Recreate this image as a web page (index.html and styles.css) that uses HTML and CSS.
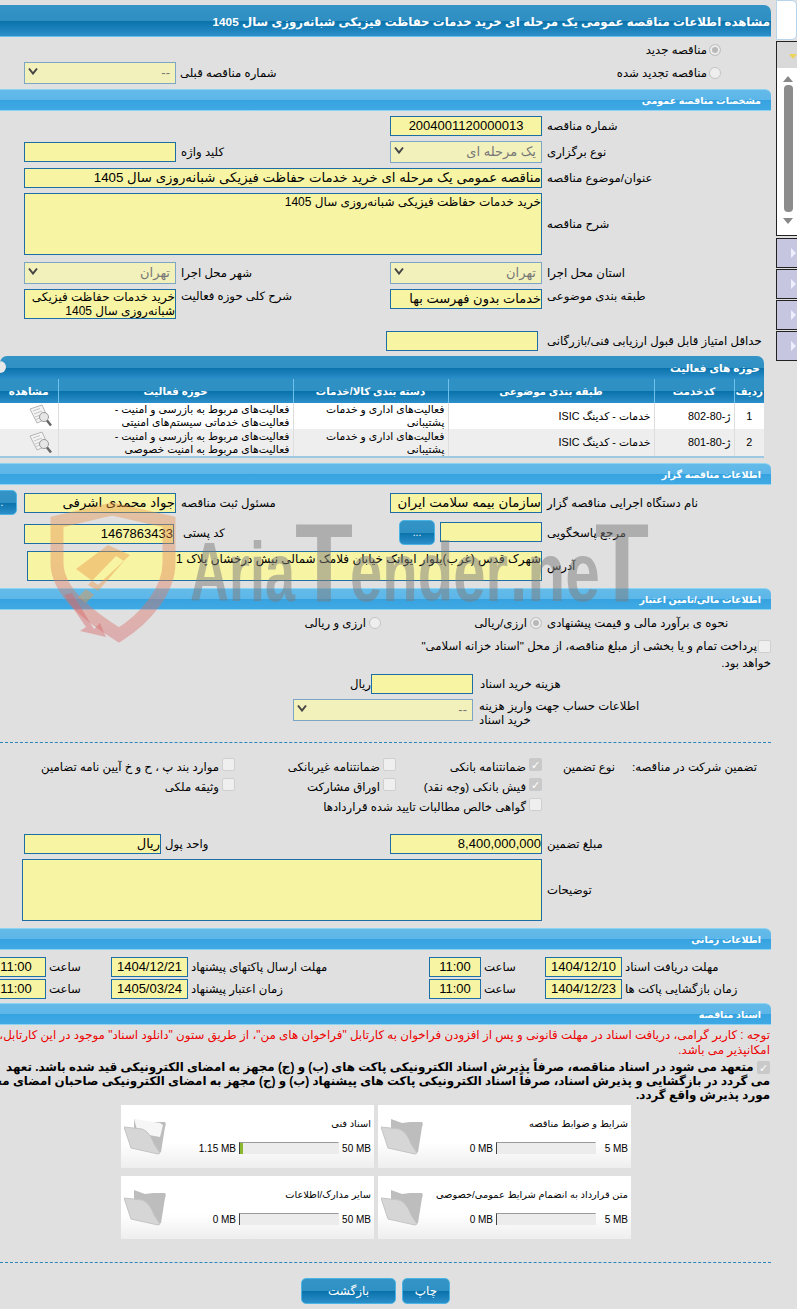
FILE: index.html
```html
<!DOCTYPE html>
<html lang="fa" dir="rtl">
<head>
  <meta charset="UTF-8">
  <title>مشاهده اطلاعات مناقصه</title>
  <link rel="stylesheet" href="styles.css">
</head>
<body>
  <!-- Side strip -->
  <aside class="side">
    <div class="side-top"></div>
    <div class="side-box">
      <div class="side-head"><i class="tri-yellow"></i></div>
      <div class="side-scroll">
        <i class="arrow-up"></i>
        <div class="thumb"></div>
        <i class="arrow-down"></i>
      </div>
    </div>
    <div class="side-tab"><i class="tri-white"></i></div>
    <div class="side-tab"><i class="tri-white"></i></div>
    <div class="side-tab"><i class="tri-white"></i></div>
    <div class="side-tab"><i class="tri-white"></i></div>
  </aside>

  <main class="main">
    <h1 class="title-bar">مشاهده اطلاعات مناقصه عمومی یک مرحله ای خرید خدمات حفاظت فیزیکی شبانه‌روزی سال 1405</h1>

    <div class="top-row">
      <div class="radio-line"><span class="radio on"></span><span>مناقصه جدید</span></div>
      <div class="prev-row">
        <div class="radio-line"><span class="radio"></span><span>مناقصه تجدید شده</span></div>
        <div class="prev-field">
          <label class="lbl">شماره مناقصه قبلی</label>
          <div class="sel"><span>--</span><svg class="chev" viewBox="0 0 10 8"><path d="M1 1.500 5 6.500 9 1.500" /></svg></div>
        </div>
      </div>
    </div>

    <h2 class="sec-bar">مشخصات مناقصه عمومی</h2>
    <div class="form">
      <div class="row two">
        <label class="lbl">شماره مناقصه</label>
        <div class="inp center">2004001120000013</div>
      </div>
      <div class="row two">
        <label class="lbl">نوع برگزاری</label>
        <div class="sel"><span>یک مرحله ای</span><svg class="chev" viewBox="0 0 10 8"><path d="M1 1.500 5 6.500 9 1.500" /></svg></div>
        <label class="lbl">کلید واژه</label>
        <div class="inp"></div>
      </div>
      <div class="row wide">
        <label class="lbl">عنوان/موضوع مناقصه</label>
        <div class="inp big">مناقصه عمومی یک مرحله ای خرید خدمات حفاظت فیزیکی شبانه‌روزی سال 1405</div>
      </div>
      <div class="row wide">
        <label class="lbl">شرح مناقصه</label>
        <div class="inp area h62">خرید خدمات حفاظت فیزیکی شبانه‌روزی سال 1405</div>
      </div>
      <div class="row two mt2">
        <label class="lbl">استان محل اجرا</label>
        <div class="sel"><span>تهران</span><svg class="chev" viewBox="0 0 10 8"><path d="M1 1.500 5 6.500 9 1.500" /></svg></div>
        <label class="lbl">شهر محل اجرا</label>
        <div class="sel"><span>تهران</span><svg class="chev" viewBox="0 0 10 8"><path d="M1 1.500 5 6.500 9 1.500" /></svg></div>
      </div>
      <div class="row two top">
        <label class="lbl">طبقه بندی موضوعی</label>
        <div class="inp">خدمات بدون فهرست بها</div>
        <label class="lbl">شرح کلی حوزه فعالیت</label>
        <div class="inp area h30">خرید خدمات حفاظت فیزیکی شبانه‌روزی سال 1405</div>
      </div>
      <div class="row score">
        <label class="lbl">حداقل امتیاز قابل قبول ارزیابی فنی/بازرگانی</label>
        <div class="inp"></div>
      </div>
    </div>

    <section class="panel">
      <h3 class="panel-head">حوزه های فعالیت <span class="toggle"></span></h3>
      <table class="grid">
        <colgroup>
          <col class="c-row"><col class="c-code"><col class="c-cat"><col class="c-group"><col class="c-area"><col class="c-view">
        </colgroup>
        <thead>
          <tr><th>ردیف</th><th>کدخدمت</th><th>طبقه بندی موضوعی</th><th>دسته بندی کالا/خدمات</th><th>حوزه فعالیت</th><th>مشاهده</th></tr>
        </thead>
        <tbody>
          <tr>
            <td class="mid">1</td><td>ژ-80-802</td><td>خدمات - کدینگ ISIC</td>
            <td>فعالیت‌های اداری و خدمات پشتیبانی</td>
            <td>فعالیت‌های مربوط به بازرسی و امنیت -<br>فعالیت‌های خدماتی سیستم‌های امنیتی</td>
            <td class="mid"><svg class="doc-ico" viewBox="0 0 25 24"><path d="M2 5 14 1l6 13-11 5z" fill="#f4f4f4" stroke="#b5b5b5"/><path d="M5 7l7-2.500M6 10l8-3M7 13l8-3M8 15.500l5-2" stroke="#c4c4c4"/><circle cx="16" cy="13" r="4.500" fill="#e6e6e6" stroke="#999"/><path d="M19 16.500l4 5" stroke="#666" stroke-width="2.500"/></svg></td>
          </tr>
          <tr class="alt">
            <td class="mid">2</td><td>ژ-80-801</td><td>خدمات - کدینگ ISIC</td>
            <td>فعالیت‌های اداری و خدمات پشتیبانی</td>
            <td>فعالیت‌های مربوط به بازرسی و امنیت -<br>فعالیت‌های مربوط به امنیت خصوصی</td>
            <td class="mid"><svg class="doc-ico" viewBox="0 0 25 24"><path d="M2 5 14 1l6 13-11 5z" fill="#f4f4f4" stroke="#b5b5b5"/><path d="M5 7l7-2.500M6 10l8-3M7 13l8-3M8 15.500l5-2" stroke="#c4c4c4"/><circle cx="16" cy="13" r="4.500" fill="#e6e6e6" stroke="#999"/><path d="M19 16.500l4 5" stroke="#666" stroke-width="2.500"/></svg></td>
          </tr>
        </tbody>
      </table>
    </section>

    <h2 class="sec-bar s2">اطلاعات مناقصه گزار</h2>
    <div class="form f2">
      <div class="row two edge-row">
        <label class="lbl">نام دستگاه اجرایی مناقصه گزار</label>
        <div class="inp big">سازمان بیمه سلامت ایران</div>
        <label class="lbl">مسئول ثبت مناقصه</label>
        <div class="inp big">جواد محمدی اشرفی</div>
        <button class="btn dots edge">...</button>
      </div>
      <div class="row ref">
        <label class="lbl">مرجع پاسخگویی</label>
        <div class="inp"></div>
        <button class="btn dots">...</button>
        <label class="lbl">کد پستی</label>
        <div class="inp">1467863433</div>
      </div>
      <div class="row addr">
        <label class="lbl">آدرس</label>
        <div class="inp area h30">شهرک قدس (غرب)بلوار ایوانک خیابان فلامک شمالی نبش درخشان پلاک 1</div>
      </div>
    </div>

    <h2 class="sec-bar s3">اطلاعات مالی/تامین اعتبار</h2>
    <div class="fin">
      <div class="cur-row">
        <span class="lbl">نحوه ی برآورد مالی و قیمت پیشنهادی</span>
        <span class="radio on"></span><span class="cur-a">ارزی/ریالی</span>
        <span class="radio"></span><span>ارزی و ریالی</span>
      </div>
      <div class="treasury"><span class="chk"></span>پرداخت تمام و یا بخشی از مبلغ مناقصه، از محل "اسناد خزانه اسلامی" خواهد بود.</div>
      <div class="cost-row">
        <label class="lbl">هزینه خرید اسناد</label>
        <div class="inp"></div>
        <span>ریال</span>
      </div>
      <div class="acct-row">
        <label class="lbl">اطلاعات حساب جهت واریز هزینه خرید اسناد</label>
        <div class="sel"><span>--</span><svg class="chev" viewBox="0 0 10 8"><path d="M1 1.500 5 6.500 9 1.500" /></svg></div>
      </div>
    </div>
    <hr class="dash d1">

    <div class="guar">
      <span class="g-title">تضمین شرکت در مناقصه:</span>
      <span class="g-type">نوع تضمین</span>
      <div class="g-opts">
        <span class="opt"><span class="chk on">✓</span>ضمانتنامه بانکی</span>
        <span class="opt"><span class="chk"></span>ضمانتنامه غیربانکی</span>
        <span class="opt"><span class="chk"></span>موارد بند پ ، ح و خ آیین نامه تضامین</span>
        <span class="opt"><span class="chk on">✓</span>فیش بانکی (وجه نقد)</span>
        <span class="opt"><span class="chk"></span>اوراق مشارکت</span>
        <span class="opt"><span class="chk"></span>وثیقه ملکی</span>
        <span class="opt full"><span class="chk"></span>گواهی خالص مطالبات تایید شده قراردادها</span>
      </div>
    </div>

    <div class="form f3">
      <div class="row money">
        <label class="lbl">مبلغ تضمین</label>
        <div class="inp">8,400,000,000</div>
        <label class="lbl">واحد پول</label>
        <div class="inp">ریال</div>
      </div>
      <div class="row notes">
        <label class="lbl">توضیحات</label>
        <div class="inp area h62"></div>
      </div>
    </div>

    <h2 class="sec-bar s4">اطلاعات زمانی</h2>
    <div class="times">
      <label class="lbl">مهلت دریافت اسناد</label><div class="inp center">1404/12/10</div>
      <label class="lbl">ساعت</label><div class="inp center">11:00</div>
      <label class="lbl">مهلت ارسال پاکتهای پیشنهاد</label><div class="inp center">1404/12/21</div>
      <label class="lbl">ساعت</label><div class="inp center">11:00</div>
      <label class="lbl">زمان بازگشایی پاکت ها</label><div class="inp center">1404/12/23</div>
      <label class="lbl">ساعت</label><div class="inp center">11:00</div>
      <label class="lbl">زمان اعتبار پیشنهاد</label><div class="inp center">1405/03/24</div>
      <label class="lbl">ساعت</label><div class="inp center">11:00</div>
    </div>

    <h2 class="sec-bar s5">اسناد مناقصه</h2>
    <p class="note-red">توجه : کاربر گرامی، دریافت اسناد در مهلت قانونی و پس از افزودن فراخوان به کارتابل "فراخوان های من"، از طریق ستون "دانلود اسناد" موجود در این کارتابل،<br>امکانپذیر می باشد.</p>
    <p class="note-bold"><span class="chk on">✓</span> متعهد می شود در اسناد مناقصه، صرفاً پذیرش اسناد الکترونیکی پاکت های (ب) و (ج) مجهز به امضای الکترونیکی قید شده باشد. تعهد<br>می گردد در بازگشایی و پذیرش اسناد، صرفاً اسناد الکترونیکی پاکت های پیشنهاد (ب) و (ج) مجهز به امضای الکترونیکی صاحبان امضای معتبر<br>مورد پذیرش واقع گردد.</p>

    <div class="docs">
      <div class="doc">
        <div class="doc-name">شرایط و ضوابط مناقصه</div>
        <div class="doc-row"><span class="size" dir="ltr">5 MB</span><span class="meter"></span><span class="used" dir="ltr">0 MB</span></div>
        <svg class="folder" viewBox="0 0 42 37"><path d="M10 1l11 4 8-1h12c1 1 1 3 0 5l-4 25-4 2L10 20z" fill="#bdbdbd"/><path d="M0 9l18 2c6 2 10 9 12 15l6 9-2 1-27-6z" fill="#d6d6d6" stroke="#c4c4c4"/></svg>
      </div>
      <div class="doc">
        <div class="doc-name">اسناد فنی</div>
        <div class="doc-row"><span class="size" dir="ltr">50 MB</span><span class="meter"><i class="fill"></i></span><span class="used" dir="ltr">1.15 MB</span></div>
        <svg class="folder" viewBox="0 0 42 37"><path d="M10 1l11 4 8-1h12c1 1 1 3 0 5l-4 25-4 2L10 20z" fill="#bdbdbd"/><path d="M10 1l26 4 3 2-3 12-22-4z" fill="#f6f6f6"/><path d="M0 9l18 2c6 2 10 9 12 15l6 9-2 1-27-6z" fill="#d6d6d6" stroke="#c4c4c4"/></svg>
      </div>
      <div class="doc">
        <div class="doc-name">متن قرارداد به انضمام شرایط عمومی/خصوصی</div>
        <div class="doc-row"><span class="size" dir="ltr">5 MB</span><span class="meter"></span><span class="used" dir="ltr">0 MB</span></div>
        <svg class="folder" viewBox="0 0 42 37"><path d="M10 1l11 4 8-1h12c1 1 1 3 0 5l-4 25-4 2L10 20z" fill="#bdbdbd"/><path d="M0 9l18 2c6 2 10 9 12 15l6 9-2 1-27-6z" fill="#d6d6d6" stroke="#c4c4c4"/></svg>
      </div>
      <div class="doc">
        <div class="doc-name">سایر مدارک/اطلاعات</div>
        <div class="doc-row"><span class="size" dir="ltr">50 MB</span><span class="meter"></span><span class="used" dir="ltr">0 MB</span></div>
        <svg class="folder" viewBox="0 0 42 37"><path d="M10 1l11 4 8-1h12c1 1 1 3 0 5l-4 25-4 2L10 20z" fill="#bdbdbd"/><path d="M0 9l18 2c6 2 10 9 12 15l6 9-2 1-27-6z" fill="#d6d6d6" stroke="#c4c4c4"/></svg>
      </div>
    </div>
    <hr class="dash d2">

    <div class="actions">
      <button class="btn print">چاپ</button>
      <button class="btn back">بازگشت</button>
    </div>
  </main>

  <!-- Watermark over the form -->
  <svg class="watermark" viewBox="0 0 797 150">
    <defs>
      <linearGradient id="wm-shield" x1="0" y1="0" x2="0" y2="1">
        <stop offset="0" stop-color="#e8964a"/>
        <stop offset="1" stop-color="#d8686a"/>
      </linearGradient>
    </defs>
    <path d="M112 8 57 21V62c0 30 35 55 62 72 27-17 50-45 50-72V21z" fill="none" stroke="url(#wm-shield)" stroke-width="13" opacity=".42"/>
    <path d="M76 68 108 44l22 10-32 30zM88 84l10 6 26-30-8-5zM78 96l8-8 8 6-8 8z" fill="#e8964a" opacity=".45"/>
    <path d="M72 92l22 36 6-6 6 14-26-6 6-4-22-32z" fill="#d8686a" opacity=".45"/>
    <g class="wm-text" fill="#7d7d7d" opacity=".5">
      <text x="190" y="100" font-size="84" textLength="105" lengthAdjust="spacingAndGlyphs">Aria</text>
      <text x="295" y="100" font-size="112" textLength="58" lengthAdjust="spacingAndGlyphs">T</text>
      <text x="350" y="100" font-size="84" textLength="158" lengthAdjust="spacingAndGlyphs">ender</text>
      <text x="510" y="100" font-size="84" textLength="90" lengthAdjust="spacingAndGlyphs">.ne</text>
      <text x="595" y="100" font-size="112" textLength="54" lengthAdjust="spacingAndGlyphs">T</text>
    </g>
  </svg>
</body>
</html>
```

FILE: styles.css
```css
html, body {
  margin: 0;
  height: 1309px;
  overflow: hidden;
}
body {
  position: relative;
  display: flex;
  gap: 5px;
  background-color: #e0e0e0;
  font-family: "Liberation Sans", "DejaVu Sans", sans-serif;
  font-size: 11.700px;
  color: #000;
}

/* side strip */
.side {
  width: 21px;
  flex: none;
}
.side-top {
  height: 38px;
  background-color: #fff;
  border: 1px solid #b8d4ec;
  border-radius: 0 5px 5px 0;
  margin-bottom: 1px;
}
.side-box {
  border: 1px solid #222;
  border-right: none;
  height: 193px;
  background-color: #fff;
}
.side-head {
  height: 26px;
  background-color: #d9d9d9;
  position: relative;
}
.tri-yellow {
  position: absolute;
  left: 12px;
  top: 12px;
  border: 4px solid transparent;
  border-top: 5px solid #ecd35a;
  border-bottom: none;
}
.side-scroll {
  display: flex;
  flex-direction: column;
  align-items: flex-start;
  padding: 8px 3px 0;
}
.arrow-up, .arrow-down {
  border: 5px solid transparent;
  margin-right: 1px;
}
.arrow-up {
  border-bottom: 6px solid #888;
  border-top: none;
}
.arrow-down {
  border-top: 6px solid #888;
  border-bottom: none;
  margin-top: 6px;
}
.thumb {
  width: 9px;
  height: 127px;
  margin: 3px 1px 0;
  border-radius: 4px;
  background-color: #8c8c8c;
}
.side-tab {
  height: 28px;
  margin-top: 1px;
  border: 1px solid #222;
  border-right: none;
  background-color: #c6c6e0;
  position: relative;
}
.side-box + .side-tab {
  margin-top: 2px;
}
.tri-white {
  position: absolute;
  left: 14px;
  top: 9px;
  border: 5px solid transparent;
  border-left: 5px solid #eef;
  border-right: none;
}

/* main column */
.main {
  width: 771px;
  flex: none;
  height: 1309px;
  overflow: hidden;
  padding-top: 5px;
  box-sizing: border-box;
}
.title-bar, .sec-bar, .panel-head {
  margin: 0;
  color: #fff;
  font-weight: bold;
}
.title-bar {
  height: 32px;
  line-height: 34px;
  font-size: 11.750px;
  white-space: nowrap;
  padding-right: 1px;
  border-radius: 0 7px 0 0;
  border-bottom: 1px solid #6ac0ea;
  box-sizing: border-box;
  background: linear-gradient(#3593c6 0, #2f8fc2 50%, #0a72aa 52%, #2c8fca 100%);
}
.sec-bar {
  height: 22px;
  line-height: 21px;
  font-size: 9.500px;
  padding-right: 10px;
  border-radius: 0 6px 0 0;
  border-top: 1px solid #8fd3f2;
  border-bottom: 1px solid #8fd3f2;
  box-sizing: border-box;
  background: linear-gradient(#64bbe9 0, #5cb6e8 50%, #36a3e0 52%, #40a9e4 100%);
}
.s2 { margin-top: 5px; }
.s3 { margin-top: 7px; }
.s4 { margin-top: 7px; }
.s5 { margin-top: 4px; }

.lbl {
  text-align: left;
  line-height: 20px;
  display: block;
}
.inp {
  height: 20px;
  line-height: 18px;
  box-sizing: border-box;
  background-color: #f7f4a4;
  border: 1px solid #1c6ea4;
  font-size: 13px;
  text-align: right;
  overflow: hidden;
  white-space: nowrap;
}
.inp.center { text-align: center; }
.inp.big { font-size: 13.300px; }
.inp.area {
  font-size: 12px;
  white-space: normal;
  line-height: 17px;
}
.h62 { height: 62px; }
.inp.h30 {
  height: 30px;
  line-height: 14px;
}
.sel {
  height: 22px;
  box-sizing: border-box;
  display: flex;
  justify-content: space-between;
  align-items: center;
  padding: 0 5px 2px 3px;
  background-color: #f2f1bb;
  border: 1px solid #7da5c4;
  color: #777;
  font-size: 13px;
}
.chev {
  width: 10px;
  height: 8px;
  margin-bottom: 2px;
}
.chev path {
  fill: none;
  stroke: #444;
  stroke-width: 2;
}

.radio {
  display: inline-block;
  flex: none;
  width: 12px;
  height: 12px;
  box-sizing: border-box;
  border-radius: 50%;
  border: 1px solid #c4c4c4;
  background-color: #eee;
}
.radio.on {
  background-color: #b8b8b8;
  box-shadow: inset 0 0 0 2px #eee;
}
.chk {
  display: inline-block;
  width: 13px;
  height: 13px;
  line-height: 13px;
  text-align: center;
  box-sizing: border-box;
  flex: none;
  border: 1px solid #cfcfcf;
  border-radius: 2px;
  background-color: #efefef;
  color: #fff;
  font-size: 11px;
}
.chk.on {
  background-color: #c9c9c9;
  border-color: #c9c9c9;
}

/* tender type */
.top-row {
  height: 51px;
}
.radio-line {
  display: flex;
  align-items: center;
  gap: 2px;
  padding-right: 50px;
  height: 20px;
}
.top-row > .radio-line {
  padding-top: 2px;
  margin-top: 1px;
  height: 19px;
}
.prev-row {
  display: flex;
  justify-content: space-between;
  align-items: center;
  margin-top: 2px;
}
.prev-field {
  display: flex;
  gap: 4px;
  margin-left: 24px;
  margin-top: 1px;
}
.prev-field .sel { width: 152px; }
.prev-field .lbl { line-height: 22px; }

/* form rows */
.form {
  display: flex;
  flex-direction: column;
  gap: 5px;
  padding-top: 5px;
}
.row {
  display: grid;
  align-items: center;
}
.row.two {
  grid-template-columns: 229px 152px 214px 152px;
}
.row .lbl { padding-left: 5px; }
.row.wide {
  grid-template-columns: 229px 518px;
}
.row.top { align-items: start; }
.row.top .lbl { line-height: 14px; }
.row.score {
  grid-template-columns: 233px 152px;
  margin-top: 7px;
}
.row.score .lbl { padding-left: 9px; }
.mt2 { margin-top: 2px; }

/* activities table */
.panel {
  width: 764px;
  margin: 5px 7px 0 0;
  border-bottom: 2px solid #9cc8e2;
  border-radius: 7px 7px 0 0;
  overflow: hidden;
}
.panel-head {
  position: relative;
  height: 23px;
  line-height: 24px;
  font-size: 10.600px;
  padding-right: 4px;
  background: linear-gradient(#3494c6 0, #2f90c4 50%, #0a72aa 52%, #2c8fca 100%);
}
.toggle {
  position: absolute;
  left: -6px;
  top: 5px;
  width: 12px;
  height: 12px;
  border-radius: 50%;
  background-color: #e8e8e8;
}
.grid {
  width: 764px;
  border-collapse: collapse;
  table-layout: fixed;
  font-size: 10.800px;
}
.c-row { width: 30px; }
.c-code { width: 80px; }
.c-cat { width: 206px; }
.c-group { width: 155px; }
.c-area { width: 235px; }
.c-view { width: 58px; }
.grid th {
  height: 24px;
  padding: 0;
  color: #fff;
  font-size: 10.300px;
  border-left: 1px solid #6fc0ea;
  background: linear-gradient(#2f90c4 0, #2f90c4 50%, #0a72aa 52%, #2c8fca 100%);
}
.grid th:last-child, .grid td:last-child { border-left: none; }
.grid td {
  height: 26px;
  padding: 0 3px;
  line-height: 13px;
  vertical-align: middle;
  background-color: #fff;
  border-left: 1px solid #ddd;
}
.grid .alt td {
  height: 27px;
  background-color: #eee;
}
.grid .mid { text-align: center; }
.doc-ico {
  display: block;
  width: 25px;
  height: 24px;
  margin: 0 2px 0 auto;
}

/* buttons */
.btn {
  border: 1px solid #4ab4e4;
  border-radius: 5px;
  color: #fff;
  font-family: inherit;
  background: linear-gradient(#3494c6 0, #2f90c4 50%, #0a72aa 52%, #2c8fca 100%);
}
.dots {
  width: 36px;
  height: 25px;
  padding: 0;
  font-size: 10px;
}

/* client rows */
.f2 { padding-top: 5px; }
.edge {
  margin-right: 7px;
}
.row.edge-row {
  grid-template-columns: 229px 152px 214px 152px 36px;
}
.row.ref {
  display: flex;
}
.row.ref > .lbl:first-child { width: 229px; box-sizing: border-box; }
.row.ref .inp:nth-child(2) { width: 102px; margin-bottom: 2px; }
.row.ref .btn { margin-right: 5px; }
.row.ref .lbl:nth-child(4) { width: 225px; box-sizing: border-box; padding-left: 9px; }
.row.ref .inp:nth-child(5) { width: 150px; margin-top: 2px; }
.row.addr {
  grid-template-columns: 229px 515px;
  margin-top: 1px;
}

/* finance */
.fin { padding-top: 5px; }
.cur-row {
  display: flex;
  height: 16px;
  align-items: center;
}
.cur-row .lbl { width: 224px; flex: none; }
.cur-row .radio { margin-left: 3px; margin-right: 5px; }
.cur-a { width: 141px; flex: none; }
.treasury {
  margin-top: 6px;
  line-height: 17px;
  width: 375px;
}
.treasury .chk { margin-left: 1px; vertical-align: middle; }
.cost-row {
  display: flex;
  align-items: center;
  margin-top: 3px;
}
.cost-row .lbl {
  width: 298px;
  flex: none;
  padding-left: 7px;
  box-sizing: border-box;
}
.cost-row .inp { width: 102px; }
.acct-row {
  display: flex;
  margin-top: 5px;
}
.acct-row .lbl {
  width: 164px;
  margin-right: 128px;
  padding-left: 6px;
  flex: none;
  line-height: 14px;
}
.acct-row .sel { width: 180px; }
.dash {
  border: none;
  border-top: 1px dashed #2a86bc;
  margin: 0;
}
.d1 { margin-top: 15px; }
.d2 { margin-top: 23px; }

/* guarantee */
.guar {
  display: flex;
  padding: 14px 14px 0 0;
  height: 76px;
}
.g-title { width: 142px; flex: none; line-height: 20px; }
.g-type { width: 73px; flex: none; line-height: 20px; }
.g-opts {
  display: grid;
  grid-template-columns: 146px 161px 240px;
  grid-auto-rows: 20px;
  height: 60px;
}
.opt {
  display: flex;
  align-items: center;
  gap: 3px;
  white-space: nowrap;
}
.opt .chk { margin-bottom: 5px; }
.full { grid-column: 1 / 4; }

.f3 { padding-top: 1px; }
.row.money {
  grid-template-columns: 229px 152px 229px 137px;
}
.row.money .lbl:nth-child(3) { padding-left: 4px; }
.row.notes {
  grid-template-columns: 229px 520px;
}

/* dates */
.times {
  display: grid;
  grid-template-columns: 149px 77px 64px 52px 241px 77px 65px 60px;
  gap: 2px 0;
  padding-top: 7px;
  width: 820px;
}
.times .lbl { padding-left: 3px; }

/* notices */
.note-red {
  margin: 3px 1px 0 0;
  width: 900px;
  color: #e00;
  line-height: 15px;
  font-size: 11.850px;
}
.note-bold {
  margin: 2px 1px 0 0;
  width: 900px;
  font-weight: bold;
  line-height: 14px;
  font-size: 11.850px;
}
.note-bold .chk { vertical-align: middle; }

/* documents */
.docs {
  display: grid;
  grid-template-columns: 253px 253px;
  grid-auto-rows: 63px;
  gap: 8px 4px;
  margin: 3px 140px 0 0;
}
.doc {
  position: relative;
  background: linear-gradient(#fff 0, #fff 60%, #eee 100%);
  padding: 13px 3px 0;
  box-sizing: border-box;
  font-size: 9.800px;
}
.doc-name {
  height: 24px;
}
.doc-row {
  display: flex;
  align-items: center;
  gap: 3px;
  font-size: 10px;
}
.size { width: 29px; text-align: right; }
.meter {
  display: block;
  width: 100px;
  height: 12px;
  background-color: #ececec;
  border-top: 1px solid #999;
  border-right: 1px solid #ececec;
  border-left: 1px solid #444;
  box-sizing: border-box;
  position: relative;
}
.fill {
  position: absolute;
  left: 0;
  top: 0;
  bottom: 0;
  width: 3px;
  background-color: #8ab82e;
}
.folder {
  position: absolute;
  left: 3px;
  top: 13px;
  width: 42px;
  height: 37px;
}

/* actions */
.actions {
  display: flex;
  gap: 6px;
  margin: 15px 321px 0 0;
  width: 149px;
}
.actions .btn {
  height: 26px;
  font-size: 12px;
  flex: none;
}
.print { width: 48px; }
.back { width: 95px; }

/* watermark */
.watermark {
  position: absolute;
  left: 0;
  top: 501px;
  width: 797px;
  height: 150px;
  direction: ltr;
  pointer-events: none;
}
.wm-text {
  font-family: "Liberation Sans", sans-serif;
  font-weight: bold;
}
```
